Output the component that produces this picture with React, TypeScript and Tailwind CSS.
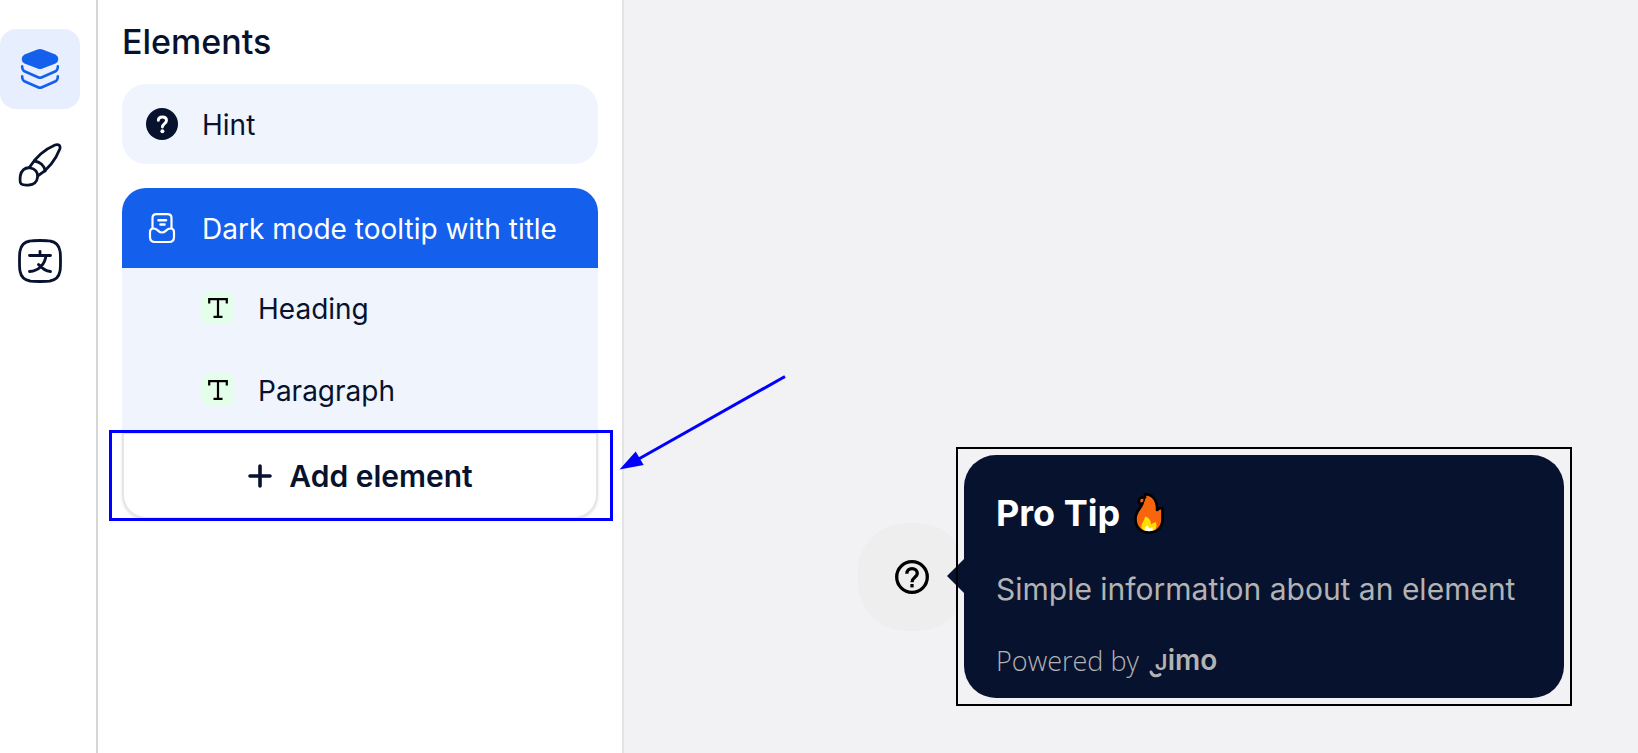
const menuItems = [
  { label: "Heading" },
  { label: "Paragraph" },
];

function LayersIcon() {
  return (
    <svg width="40" height="42" viewBox="0 0 40 42" fill="none" aria-hidden="true">
      <path d="M17.5 1.5Q20 .4 22.500 1.500L35.500 6.500Q38.300 8 38.300 11Q38.300 14 35.500 15.500L22.500 20.500Q20 21.600 17.500 20.500L4.500 15.500Q1.700 14 1.700 11Q1.700 8 4.500 6.500Z" fill="#1460ec" />
      <path d="M2.200 18.300C2 21 3 22.700 5.500 23.800L18 29.300Q20 30.200 22 29.300L34.500 23.800C37 22.700 38 21 37.800 18.300" stroke="#1460ec" strokeWidth="2.600" strokeLinecap="round" />
      <path d="M2.200 28.300C2 31 3 32.700 5.500 33.800L18 39.300Q20 40.200 22 39.300L34.500 33.800C37 32.700 38 31 37.800 28.300" stroke="#1460ec" strokeWidth="2.600" strokeLinecap="round" />
    </svg>
  );
}

function BrushIcon() {
  return (
    <svg width="44" height="44" viewBox="0 0 44 44" fill="none" stroke="#07122e" strokeWidth="2.800" strokeLinejoin="round" strokeLinecap="round" aria-hidden="true">
      <path d="M11.500 24.300C17 15.500 26.500 6.500 37 2C40.500.7 42.800 2.500 41.800 6C37.500 17 30 26.500 20 32.800" />
      <path d="M16.500 18C22 18.500 26.500 23 27.200 28" />
      <path d="M3.300 41C1.500 39.500 2 35.500 2.300 33C3 27.500 7 24.200 12 24.800C17 25.400 20.200 29.500 19.600 34C19 39 15.500 42 11 42C8 42.200 5 42.500 3.300 41Z" />
    </svg>
  );
}

function TranslateIcon() {
  return (
    <svg width="44" height="44" viewBox="0 0 44 44" fill="none" stroke="#07122e" strokeWidth="2.800" strokeLinecap="round" strokeLinejoin="round" aria-hidden="true">
      <path d="M22 1.500C27 1.500 30 1.500 32 2C38 3 41 6 42 12C42.500 14 42.500 17 42.500 22S42.500 30 42 32C41 38 38 41 32 42C30 42.500 27 42.500 22 42.500S14 42.500 12 42C6 41 3 38 2 32C1.500 30 1.500 27 1.500 22S1.500 14 2 12C3 6 6 3 12 2C14 1.500 17 1.500 22 1.500Z" />
      <path d="M11.500 16.500H32.500M22 12.500V16.500M28 16.500C27 25 21 32 11.500 32.500M20.500 25.500C24 29.500 28 32 32.500 32.500" />
    </svg>
  );
}

function HintIcon() {
  return (
    <svg width="32" height="32" viewBox="0 0 32 32" fill="none" aria-hidden="true">
      <circle cx="16" cy="16" r="16" fill="#07122e" />
      <path d="M12.300 12.300C12.500 10 14 9 16.300 9C18.800 9 20.500 10.400 20.500 12.500C20.500 15.500 16.400 15.600 16.400 19" stroke="#fff" strokeWidth="2.900" strokeLinecap="round" />
      <circle cx="16.400" cy="23.200" r="2" fill="#fff" />
    </svg>
  );
}

function TooltipIcon() {
  return (
    <svg width="32" height="32" viewBox="0 0 32 32" fill="none" stroke="#fff" strokeWidth="2.200" strokeLinecap="round" strokeLinejoin="round" aria-hidden="true">
      <path d="M6.500 16V6C6.500 3.500 8 2.200 10.500 2.200H21.500C24 2.200 25.500 3.500 25.500 6V16" />
      <path d="M12.500 8.200H20M14.500 12.500H18.500" strokeWidth="2.600" />
      <path d="M4 20C4 17.500 5.500 16.500 7.500 16.500C12 16.500 12 20.500 16 20.500S20 16.500 24.500 16.500C26.500 16.500 28 17.500 28 20V25C28 28.500 26.500 30 23 30H9C5.500 30 4 28.500 4 25Z" />
    </svg>
  );
}

function TextIcon() {
  return (
    <span className="flex size-8 items-center justify-center rounded-lg bg-[#e4ffe9]">
      <svg width="20" height="20" viewBox="0 0 20 20" fill="none" stroke="#000" strokeWidth="2.200" aria-hidden="true">
        <path d="M1.200 5.500V1.200H18.800V5.500M10 1V19M5.500 18.800H14.500" />
      </svg>
    </span>
  );
}

function FireIcon() {
  return (
    <svg width="30" height="41" viewBox="0 0 30 41" role="img" aria-label="fire">
      <path d="M11 1.300C18 1 23.500 7 23 17C24 16 25 15.300 28.500 15V26C28.500 34.500 23 39.500 15 39.500S1.500 34.500 1.500 26C1.500 19 6 16.500 8.500 10.500L5 10.300V7.500C5 5 7.500 4 11 4.500Z" fill="#f9650d" stroke="#000" strokeWidth="2.600" strokeLinejoin="round" />
      <path d="M10.500 4.500C10.500 7 10 9 8.500 10.500" fill="none" stroke="#000" strokeWidth="1.600" />
      <path d="M7.500 35C6.800 30 10.800 28 11 23.500C15 24.500 17 27.500 17 31.500C18.500 30 20 29.500 22 29.200C23 33 22.300 35.500 20.500 37Q15 39.300 9.500 37Z" fill="#ffdf00" />
      <path d="M10.500 37.300C10.500 35 11.500 34 13.500 32.500L15.500 35.500L18.500 34.500L19 37.300Q15 38.800 10.500 37.300Z" fill="#fff" />
    </svg>
  );
}

function Sidebar() {
  return (
    <nav className="flex w-[98px] shrink-0 flex-col gap-4 border-r-2 border-[#d6d6d6] bg-white pt-[29px]">
      <button aria-label="Elements" className="flex size-20 items-center justify-center rounded-2xl bg-[#e7eefd]">
        <LayersIcon />
      </button>
      <button aria-label="Style" className="flex size-20 items-center justify-center rounded-2xl">
        <BrushIcon />
      </button>
      <button aria-label="Translations" className="flex size-20 items-center justify-center rounded-2xl">
        <TranslateIcon />
      </button>
    </nav>
  );
}

function ElementsPanel() {
  return (
    <section className="w-[526px] shrink-0 border-r-2 border-[#e4e4e6] bg-white px-6 pt-5 text-[28px] leading-10 text-[#07122e]">
      <h1 className="mb-5 text-[34px] leading-11 font-medium">Elements</h1>

      <button className="flex h-20 w-full items-center gap-6 rounded-3xl bg-[#eff4fd] px-6">
        <HintIcon />
        <span className="pt-0.5">Hint</span>
      </button>

      <div className="mt-6">
        <button className="flex h-20 w-full items-center gap-6 rounded-t-3xl bg-[#1460ec] px-6 text-white">
          <TooltipIcon />
          <span className="pt-0.5">Dark mode tooltip with title</span>
        </button>
        <div className="flex flex-col gap-0.5 bg-[#eff4fd] pb-0.5">
          {menuItems.map((item) => (
            <button key={item.label} className="flex h-20 items-center gap-6 pl-20">
              <TextIcon />
              <span className="pt-0.5">{item.label}</span>
            </button>
          ))}
        </div>

        <div className="relative">
          <button className="flex h-[87px] w-full items-center justify-center gap-4 rounded-b-3xl border-2 border-[#e5e5e7] text-[30px] font-semibold shadow-sm">
            <svg width="26" height="26" viewBox="0 0 26 26" stroke="currentColor" strokeWidth="3.600" strokeLinecap="round" aria-hidden="true">
              <path d="M13 3V23M3 13H23" />
            </svg>
            Add element
          </button>

          {/* Highlight box and arrow */}
          <div className="pointer-events-none absolute -top-0.5 -right-[15px] -bottom-0.5 -left-[13px] border-3 border-[#0000ff]" />
          <svg className="pointer-events-none absolute -top-[58px] left-full ml-5" width="170" height="98" viewBox="0 0 170 98" aria-hidden="true">
            <path d="M167 2.500L18 86.500" stroke="#0000ff" strokeWidth="3" />
            <path d="M1.500 95.500L17.700 77.500L25.700 91Z" fill="#0000ff" />
          </svg>
        </div>
      </div>
    </section>
  );
}

function Preview() {
  return (
    <main className="flex flex-1 items-start justify-end bg-[#f2f2f4] pt-[447px] pr-[66px]">
      {/* Hint trigger */}
      <div className="mt-[76px] -mr-2.5 flex size-[108px] shrink-0 items-center justify-center rounded-[48px] bg-[#eeeeef]">
        <svg width="34" height="34" viewBox="0 0 34 34" fill="none" stroke="#000" strokeWidth="3.300" aria-hidden="true">
          <circle cx="17" cy="17" r="15.300" />
          <path d="M11.800 13.800C11.800 10.500 14 8.600 17 8.600S22.300 10.700 22.300 13.600C22.300 17.300 17 17.500 17 22.200" />
          <path d="M17 24V27.400" />
        </svg>
      </div>

      <div className="relative shrink-0 border-2 border-black bg-[#f2f2f4] p-1.5">
        <svg className="absolute top-[109px] -left-[11px]" width="18" height="36" viewBox="0 0 18 36" aria-hidden="true">
          <path d="M18 0V36L0 18Z" fill="#07122e" />
          <path d="M10 0V36" stroke="#000" strokeWidth="2" />
        </svg>
        <div className="flex h-[243px] w-[600px] flex-col rounded-[32px] bg-[#07122e] px-8 pt-9 text-[#b3b3b3]">
          <h2 className="flex items-center gap-3.5 text-[36px] leading-11 font-bold text-white">
            Pro Tip
            <FireIcon />
          </h2>
          <p className="mt-8 text-[30px] leading-11 whitespace-nowrap">Simple information about an element</p>
          <p className="mt-7 flex items-center gap-4 font-['Open_Sans',sans-serif] text-[27px] leading-11 font-light">
            Powered by
            <span className="relative font-[Inter,sans-serif] text-[28px] leading-8 font-semibold">
              <span className="text-[22px]">J</span>imo
              <svg className="absolute bottom-0 -left-1.5" width="14" height="8" viewBox="0 0 14 8" fill="none" aria-hidden="true">
                <path d="M2 2C3.500 6.500 8 6.500 11 4.500" stroke="#b3b3b3" strokeWidth="3" strokeLinecap="round" />
              </svg>
            </span>
          </p>
        </div>
      </div>
    </main>
  );
}

export default function App() {
  return (
    <div className="flex min-h-screen overflow-hidden bg-white font-[Inter,sans-serif]">
      <Sidebar />
      <ElementsPanel />
      <Preview />
    </div>
  );
}
